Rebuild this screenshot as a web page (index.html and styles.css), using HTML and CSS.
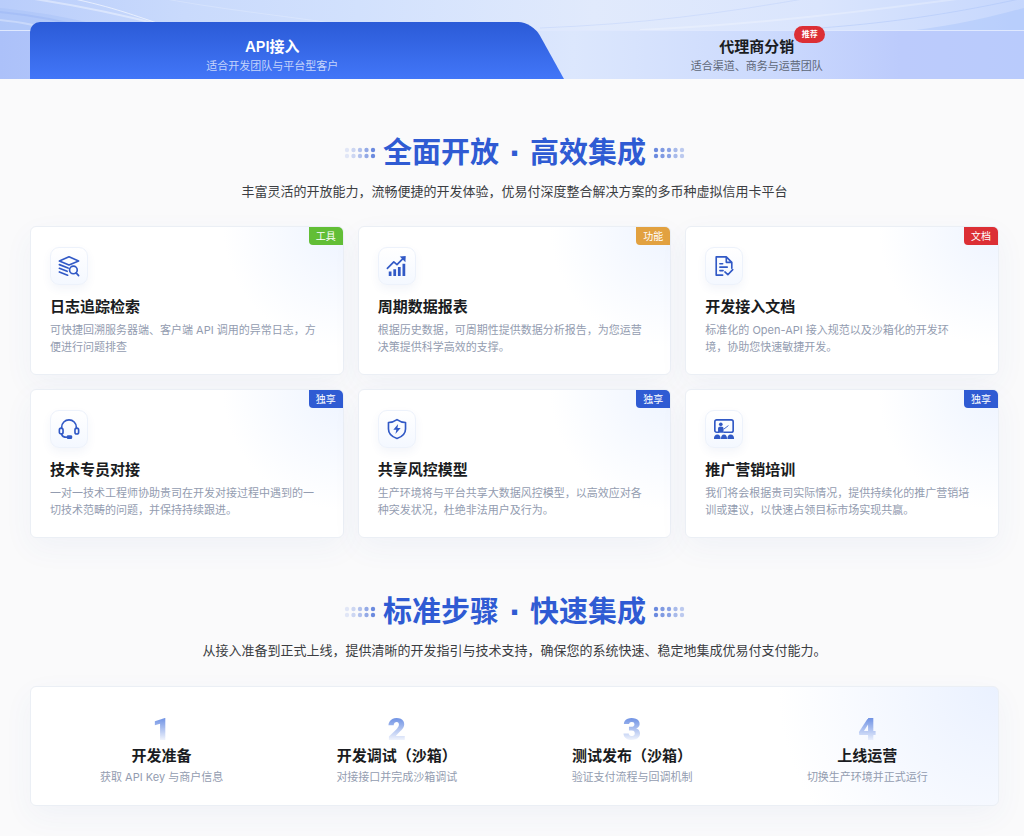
FILE: index.html
```
<!DOCTYPE html>
<html lang="zh-CN">
<head>
  <meta charset="UTF-8" />
  <meta name="viewport" content="width=device-width, initial-scale=1.0"/>
  <title>优易付 | API接入</title>
  <link rel="stylesheet" href="styles.css">
</head>
<body>
<header class="banner">
  <svg class="banner-lines" viewBox="0 0 1024 79" preserveAspectRatio="none" fill="none" aria-hidden="true">
    <path d="M0 8C40 12 90 20 150 40L0 40Z" fill="#9db9f6" opacity=".3"/>
    <path d="M0 -6C60 2 120 14 165 26" stroke="#fff" stroke-width="2" opacity=".4"/>
    <path d="M0 12C30 15 60 20 90 29" stroke="#8fadf2" stroke-width="2" opacity=".3"/>
    <path d="M0 20C20 22 40 26 50 30" stroke="#fff" stroke-width="2" opacity=".3"/>
    <path d="M60 -4C110 6 130 14 160 24" stroke="#fff" stroke-width="1" opacity=".6"/>
    <path d="M150 -4C220 10 290 16 350 26" stroke="#fff" stroke-width="1" opacity=".2"/>
    <path d="M540 28C640 24 720 14 820 -4" stroke="#b9cdf9" stroke-width="1" opacity=".4"/>
    <path d="M640 30C760 24 860 12 980 -4" stroke="#fff" stroke-width="2" opacity=".25"/>
    <path d="M900 32C940 28 980 20 1024 8L1024 32Z" fill="#9dbcfa" opacity=".35"/>
    <path d="M820 28C900 22 960 12 1024 -2" stroke="#9fbaf6" stroke-width="1" opacity=".35"/>
  </svg>
  <nav class="tabs">
    <a href="#api" class="tab active">
      <b>API接入</b>
      <span>适合开发团队与平台型客户</span>
    </a>
    <a href="#agent" class="tab">
      <b>代理商分销<em>推荐</em></b>
      <span>适合渠道、商务与运营团队</span>
    </a>
  </nav>
</header>

<main class="container">
  <section id="api">
    <div class="heading">
      <svg class="dots" viewBox="0 0 32 12" fill="#2f5bd3" aria-hidden="true">
        <g opacity=".12"><circle cx="3" cy="3" r="2.2"/><circle cx="3" cy="9" r="2.2"/></g>
        <g opacity=".22"><circle cx="9.5" cy="3" r="2.2"/><circle cx="9.5" cy="9" r="2.2"/></g>
        <g opacity=".35"><circle cx="16" cy="3" r="2.2"/><circle cx="16" cy="9" r="2.2"/></g>
        <g opacity=".5"><circle cx="22.5" cy="3" r="2.2"/><circle cx="22.5" cy="9" r="2.2"/></g>
        <g opacity=".7"><circle cx="29" cy="3" r="2.2"/><circle cx="29" cy="9" r="2.2"/></g>
      </svg>
      <h2>全面开放 · 高效集成</h2>
      <svg class="dots" viewBox="0 0 32 12" fill="#2f5bd3" aria-hidden="true">
        <g opacity=".7"><circle cx="3" cy="3" r="2.2"/><circle cx="3" cy="9" r="2.2"/></g>
        <g opacity=".6"><circle cx="9.5" cy="3" r="2.2"/><circle cx="9.5" cy="9" r="2.2"/></g>
        <g opacity=".55"><circle cx="16" cy="3" r="2.2"/><circle cx="16" cy="9" r="2.2"/></g>
        <g opacity=".4"><circle cx="22.5" cy="3" r="2.2"/><circle cx="22.5" cy="9" r="2.2"/></g>
        <g opacity=".3"><circle cx="29" cy="3" r="2.2"/><circle cx="29" cy="9" r="2.2"/></g>
      </svg>
    </div>
    <p class="subtitle">丰富灵活的开放能力，流畅便捷的开发体验，优易付深度整合解决方案的多币种虚拟信用卡平台</p>

    <div class="cards">
      <article class="card">
        <span class="tag green">工具</span>
        <div class="icon">
          <svg viewBox="0 0 24 24">
            <path d="M12 2L22.5 6.5L12 10.8L1.5 6.5Z"/>
            <path d="M1.5 10.5L11 14.3M1.5 14.5L10 17.8M1.5 18.5L10.5 22"/>
            <circle cx="16.8" cy="16.3" r="4.2"/>
            <path d="M19.8 19.5L22.5 22.5"/>
          </svg>
        </div>
        <h3>日志追踪检索</h3>
        <p>可快捷回溯服务器端、客户端 API 调用的异常日志，方便进行问题排查</p>
      </article>
      <article class="card">
        <span class="tag orange">功能</span>
        <div class="icon">
          <svg viewBox="0 0 24 24">
            <path d="M1.5 14.5L8.5 7.5L12 10.5L19 3.5"/>
            <path class="solid" d="M15 1.5L21.5 1.2L21.2 7.8Z"/>
            <path class="solid" d="M3 18h3v5h-3zM8 15.5h3v7.5h-3zM13 13h3v10h-3zM18 9.5h3v13.5h-3z"/>
          </svg>
        </div>
        <h3>周期数据报表</h3>
        <p>根据历史数据，可周期性提供数据分析报告，为您运营决策提供科学高效的支撑。</p>
      </article>
      <article class="card">
        <span class="tag red">文档</span>
        <div class="icon">
          <svg viewBox="0 0 24 24">
            <path d="M10.5 22H3.5V2H14.5L20.5 8V14.5M14.5 2V8H20.5"/>
            <path d="M7.5 9.5H10.5M7.5 13.3H15.5M7.5 17H11"/>
            <path d="M13 18.5L16.2 21.5L21.5 16"/>
          </svg>
        </div>
        <h3>开发接入文档</h3>
        <p>标准化的 Open-API 接入规范以及沙箱化的开发环<br>境，协助您快速敏捷开发。</p>
      </article>
      <article class="card">
        <span class="tag blue">独享</span>
        <div class="icon">
          <svg viewBox="0 0 24 24">
            <path d="M4 11.5V10A8 8 0 0 1 20 10V11.5"/>
            <rect x="1.5" y="11" width="4" height="6.5" rx="2"/>
            <rect x="18.5" y="11" width="4" height="6.5" rx="2"/>
            <path d="M4 17.5C4.3 20 6 21 10 21"/>
            <rect class="solid" x="9.5" y="18.7" width="6" height="4.3" rx="1.5"/>
          </svg>
        </div>
        <h3>技术专员对接</h3>
        <p>一对一技术工程师协助贵司在开发对接过程中遇到的一切技术范畴的问题，并保持持续跟进。</p>
      </article>
      <article class="card">
        <span class="tag blue">独享</span>
        <div class="icon">
          <svg viewBox="0 0 24 24">
            <path d="M12 1.8C15 4 18 4.9 21.3 4.9V12C21.3 17 17.5 20.5 12 22.3C6.5 20.5 2.7 17 2.7 12V4.9C6 4.9 9 4 12 1.8Z"/>
            <path class="solid" d="M13.2 6.5L8 12.7H11.3L10.3 17.5L16 11H12.5Z"/>
          </svg>
        </div>
        <h3>共享风控模型</h3>
        <p>生产环境将与平台共享大数据风控模型，以高效应对各种突发状况，杜绝非法用户及行为。</p>
      </article>
      <article class="card">
        <span class="tag blue">独享</span>
        <div class="icon">
          <svg viewBox="0 0 24 24">
            <path d="M6 15.5H4A2 2 0 0 1 2 13.5V4A2 2 0 0 1 4 2H20A2 2 0 0 1 22 4V13.5A2 2 0 0 1 20 15.5H12"/>
            <circle class="solid" cx="8.5" cy="6.8" r="2"/>
            <path class="solid" d="M5.5 16V11.5Q5.5 9.3 8.5 9.3Q11.5 9.3 11.5 11.5V16Z"/>
            <path class="thin" d="M12 12L16.5 8.5"/>
            <path class="solid" d="M1 23Q1 18 4.8 18Q8.3 18 8.3 23ZM8.7 23Q8.7 18 12 18Q15.3 18 15.3 23ZM15.7 23Q15.7 18 19.2 18Q23 18 23 23Z"/>
          </svg>
        </div>
        <h3>推广营销培训</h3>
        <p>我们将会根据贵司实际情况，提供持续化的推广营销培训或建议，以快速占领目标市场实现共赢。</p>
      </article>
    </div>
  </section>

  <section>
    <div class="heading">
      <svg class="dots" viewBox="0 0 32 12" fill="#2f5bd3" aria-hidden="true">
        <g opacity=".12"><circle cx="3" cy="3" r="2.2"/><circle cx="3" cy="9" r="2.2"/></g>
        <g opacity=".22"><circle cx="9.5" cy="3" r="2.2"/><circle cx="9.5" cy="9" r="2.2"/></g>
        <g opacity=".35"><circle cx="16" cy="3" r="2.2"/><circle cx="16" cy="9" r="2.2"/></g>
        <g opacity=".5"><circle cx="22.5" cy="3" r="2.2"/><circle cx="22.5" cy="9" r="2.2"/></g>
        <g opacity=".7"><circle cx="29" cy="3" r="2.2"/><circle cx="29" cy="9" r="2.2"/></g>
      </svg>
      <h2>标准步骤 · 快速集成</h2>
      <svg class="dots" viewBox="0 0 32 12" fill="#2f5bd3" aria-hidden="true">
        <g opacity=".7"><circle cx="3" cy="3" r="2.2"/><circle cx="3" cy="9" r="2.2"/></g>
        <g opacity=".6"><circle cx="9.5" cy="3" r="2.2"/><circle cx="9.5" cy="9" r="2.2"/></g>
        <g opacity=".55"><circle cx="16" cy="3" r="2.2"/><circle cx="16" cy="9" r="2.2"/></g>
        <g opacity=".4"><circle cx="22.5" cy="3" r="2.2"/><circle cx="22.5" cy="9" r="2.2"/></g>
        <g opacity=".3"><circle cx="29" cy="3" r="2.2"/><circle cx="29" cy="9" r="2.2"/></g>
      </svg>
    </div>
    <p class="subtitle">从接入准备到正式上线，提供清晰的开发指引与技术支持，确保您的系统快速、稳定地集成优易付支付能力。</p>

    <ol class="steps">
      <li><span class="num">1</span><h3>开发准备</h3><p>获取 API Key 与商户信息</p></li>
      <li><span class="num">2</span><h3>开发调试（沙箱）</h3><p>对接接口并完成沙箱调试</p></li>
      <li><span class="num">3</span><h3>测试发布（沙箱）</h3><p>验证支付流程与回调机制</p></li>
      <li><span class="num">4</span><h3>上线运营</h3><p>切换生产环境并正式运行</p></li>
    </ol>
  </section>
</main>
</body>
</html>
```
FILE: styles.css
```
* { margin: 0; padding: 0; box-sizing: border-box; }
body {
  font-family: Inter, "Noto Sans CJK SC", sans-serif;
  background: #fafafb;
  color: #1a1c21;
  overflow-x: hidden;
}
a { text-decoration: none; color: inherit; }

/* top banner + tabs */
.banner {
  position: relative;
  padding-top: 22px;
  background: linear-gradient(to right, #b9cdfb 0%, #c9dafc 18%, #d2e1fd 35%, #e1eafc 58%, #dae5fd 80%, #c6d7fd 100%);
}
.banner-lines {
  position: absolute;
  top: 0;
  left: 0;
  width: 100%;
  height: 100%;
}
.tabs {
  position: relative;
  display: grid;
  grid-template-columns: 1fr 1fr;
  padding: 0 25px 0 30px;
}
/* translucent strip behind the tabs */
.tabs::before {
  content: "";
  position: absolute;
  inset: 8px 0 0 0;
  background: linear-gradient(to right, #acc1f9 0%, #dce7fd 56%, #ccdafd 75%, #bccbfc 88%, #b9cbfc 100%);
  border-top: 1px solid #dfe8fe;
}
.tab {
  position: relative;
  display: flex;
  flex-direction: column;
  align-items: center;
  height: 57px;
  padding-top: 14px;
}
.tab b {
  position: relative;
  font-size: 15px;
  line-height: 22px;
  font-weight: 600;
}
.tab span {
  position: relative;
  font-size: 11px;
  line-height: 16px;
  color: #5d6676;
}
.tab.active { color: #fff; }
.tab.active span { color: #c5d4fb; }
.tab.active::before, .tab.active::after {
  content: "";
  position: absolute;
  top: 0;
  bottom: 0;
  background: linear-gradient(to bottom, #2b5bd7, #4276f8);
}
.tab.active::before {
  left: 0;
  right: 20px;
  border-radius: 10px 0 0 0;
}
/* slanted right edge */
.tab.active::after {
  right: -49px;
  width: 120px;
  border-radius: 0 14px 0 0;
  transform: skewX(29deg);
  transform-origin: bottom right;
}
.tab em {
  position: absolute;
  left: 100%;
  top: -10px;
  width: 31px;
  height: 17px;
  border-radius: 9px;
  background: #dc2f35;
  color: #fff;
  font-size: 8px;
  line-height: 17px;
  font-style: normal;
  text-align: center;
}

.container { padding: 0 25px 30px 30px; }

/* section headings */
.heading {
  display: flex;
  justify-content: center;
  align-items: center;
  gap: 7px;
  padding-top: 54px;
}
.heading h2 {
  font-family: "DejaVu Sans", "Noto Sans CJK SC", sans-serif;
  font-size: 29px;
  line-height: 40px;
  font-weight: 600;
  color: #2f5bd3;
}
.dots { width: 32px; height: 12px; }
.subtitle {
  margin-top: 8px;
  text-align: center;
  font-size: 13px;
  line-height: 20px;
  color: #3b3d42;
}

/* feature cards */
.cards {
  display: grid;
  grid-template-columns: repeat(3, 1fr);
  gap: 14px;
  margin-top: 25px;
}
.card {
  position: relative;
  padding: 20px 19px 18px;
  border: 1px solid #ebeff5;
  border-radius: 6px;
  background: radial-gradient(circle at 100% 0, #eef4ff 0, #fff 120px);
  box-shadow: 0 10px 30px rgba(50, 100, 180, 0.05);
}
.tag {
  position: absolute;
  top: 0;
  right: 0;
  width: 34px;
  height: 18px;
  border-radius: 0 5px 0 4px;
  color: #fff;
  font-size: 10px;
  line-height: 18px;
  text-align: center;
}
.green { background: #62be36; }
.orange { background: #e2a140; }
.red { background: #dc2f35; }
.blue { background: #2f5bd3; }
.icon {
  display: flex;
  align-items: center;
  justify-content: center;
  width: 38px;
  height: 38px;
  border: 1px solid #edf2fb;
  border-radius: 9px;
  background: linear-gradient(to bottom, #fff, #f4f8ff);
  box-shadow: 0 4px 10px rgba(50, 90, 170, 0.06);
}
.icon svg {
  width: 22px;
  height: 22px;
  fill: none;
  stroke: #3159c6;
  stroke-width: 1.8;
  stroke-linejoin: round;
  stroke-linecap: round;
}
.icon .solid { fill: #3159c6; stroke: none; }
.icon .thin { stroke-width: 1; }
h3 {
  font-size: 15px;
  line-height: 22px;
  font-weight: 600;
}
.card h3 { margin-top: 11px; }
.card p, .steps p {
  font-size: 11px;
  line-height: 17px;
  color: #939cb0;
}
.card p { margin-top: 4px; }

/* steps */
.steps {
  display: grid;
  grid-template-columns: repeat(4, 1fr);
  margin-top: 26px;
  padding: 28px 13px 19px;
  list-style: none;
  text-align: center;
  border: 1px solid #ebeff5;
  border-radius: 6px;
  background: radial-gradient(circle at 100% 0, #eaf1ff 0, #fff 220px);
  box-shadow: 0 10px 30px rgba(50, 100, 180, 0.05);
}
.num {
  display: block;
  height: 30px;
  font-family: Impact, Roboto, sans-serif;
  font-size: 32px;
  line-height: 28px;
  font-weight: 900;
  color: transparent;
  background: linear-gradient(to bottom, #6f92e4 10%, rgba(160, 185, 245, 0) 92%);
  -webkit-background-clip: text;
  background-clip: text;
}
.steps p { margin-top: 2px; }
```
